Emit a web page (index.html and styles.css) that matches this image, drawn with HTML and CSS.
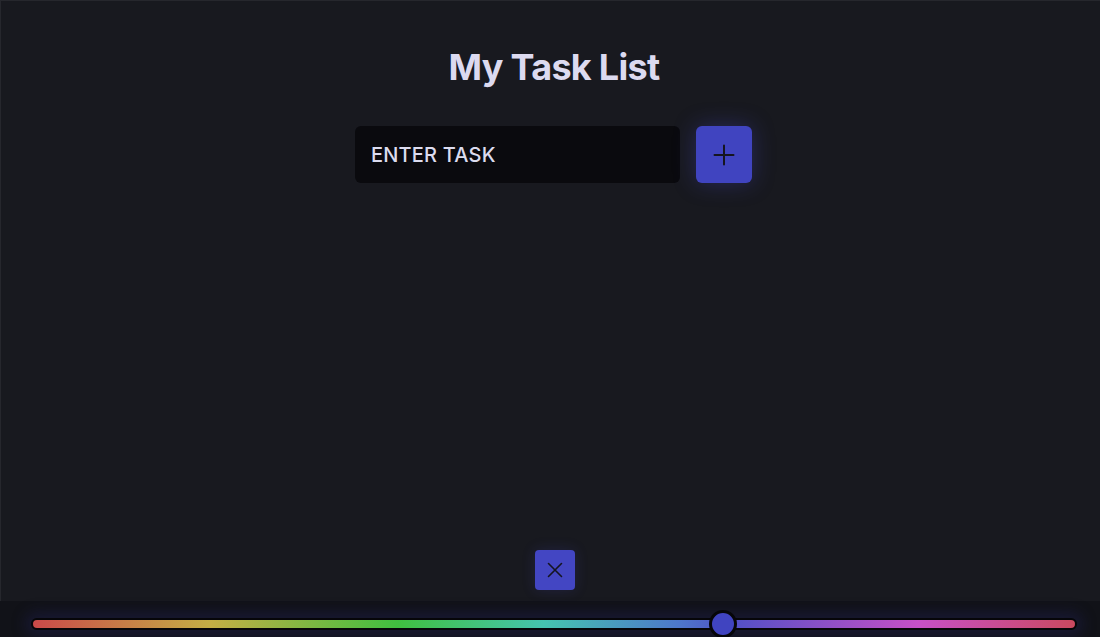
FILE: index.html
```html
<!DOCTYPE html>
<html lang="en">
<head>
<meta charset="utf-8">
<title>My Task List</title>
<link rel="stylesheet" href="styles.css">
</head>
<body>
<div class="app">
  <main class="main">
    <h1 class="title">My Task List</h1>
    <form class="task-form">
      <input class="task-input" type="text" placeholder="ENTER TASK">
      <button class="add-btn" type="button" aria-label="Add task">
        <svg width="24" height="24" viewBox="0 0 24 24" fill="none" stroke="#15151f" stroke-width="2" stroke-linecap="round"><path d="M12 2.5v19M2.5 12h19"/></svg>
      </button>
    </form>
  </main>
  <div class="clear-row">
    <button class="clear-btn" type="button" aria-label="Clear">
      <svg width="18" height="18" viewBox="0 0 18 18" fill="none" stroke="#15151f" stroke-width="1.6" stroke-linecap="round"><path d="M2.5 2.5l13 13M15.5 2.5l-13 13"/></svg>
    </button>
  </div>
  <div class="slider-bar">
    <div class="track">
      <div class="thumb" style="left: 66.2%"></div>
    </div>
  </div>
</div>
</body>
</html>
```
FILE: styles.css
```css
* { box-sizing: border-box; }
html, body { margin: 0; padding: 0; height: 100%; }
body {
  background: #18191f;
  font-family: Inter, "Noto Sans", sans-serif;
  color: #dcdaf0;
}
.app {
  height: 100vh;
  display: flex;
  flex-direction: column;
  border-top: 1px solid #26272d;
  border-left: 1px solid #26272d;
}
.main {
  flex: 1;
  display: flex;
  flex-direction: column;
  align-items: center;
}
.title {
  margin: 44px 0 0;
  padding-left: 7px;
  font-size: 36px;
  font-weight: 700;
  line-height: 44px;
  color: #dcdaf0;
  letter-spacing: -0.7px;
}
.task-form {
  margin-top: 37px;
  display: flex;
  gap: 16px;
  padding-left: 6px;
}
.task-input {
  width: 325px;
  height: 57px;
  background: #0a0a0e;
  border: none;
  border-radius: 6px;
  padding: 0 16px;
  font-family: Inter, "Noto Sans", sans-serif;
  font-size: 20px;
  font-weight: 500;
  letter-spacing: 0.2px;
  color: #dcdcef;
  outline: none;
}
.task-input::placeholder { color: #dcdcef; opacity: 1; }
.add-btn {
  width: 56px;
  height: 57px;
  border: none;
  border-radius: 6px;
  background: #4044c0;
  display: flex;
  align-items: center;
  justify-content: center;
  box-shadow: 0 0 22px rgba(70, 72, 200, 0.35);
  padding: 0;
}
.clear-row {
  display: flex;
  justify-content: center;
  padding-bottom: 11px;
  padding-left: 8px;
}
.clear-btn {
  width: 40px;
  height: 40px;
  border: none;
  border-radius: 4px;
  background: #4346c3;
  display: flex;
  align-items: center;
  justify-content: center;
  padding: 0;
  box-shadow: 0 0 14px rgba(70, 72, 200, 0.2);
}
.slider-bar {
  height: 36px;
  background: #111218;
  display: flex;
  align-items: center;
  padding: 0 23px 0 31px;
  margin-left: -1px;
}
.track {
  position: relative;
  flex: 1;
  height: 12px;
  margin-top: 10px;
  border: 2px solid #060609;
  border-radius: 6px;
  background: linear-gradient(to right,
    hsl(0, 55%, 54%) 0%,
    hsl(50, 52%, 52%) 17%,
    hsl(120, 50%, 50%) 35%,
    hsl(170, 52%, 52%) 49%,
    hsl(220, 55%, 55%) 62%,
    hsl(240, 52%, 55%) 67%,
    hsl(300, 52%, 55%) 85%,
    hsl(350, 55%, 54%) 100%);
  box-shadow: 0 0 14px 6px rgba(30, 30, 80, 0.45);
}
.thumb {
  position: absolute;
  top: 50%;
  width: 28px;
  height: 28px;
  margin-left: -14px;
  margin-top: -14px;
  border-radius: 50%;
  background: #4044c0;
  border: 3px solid #060609;
}
```
